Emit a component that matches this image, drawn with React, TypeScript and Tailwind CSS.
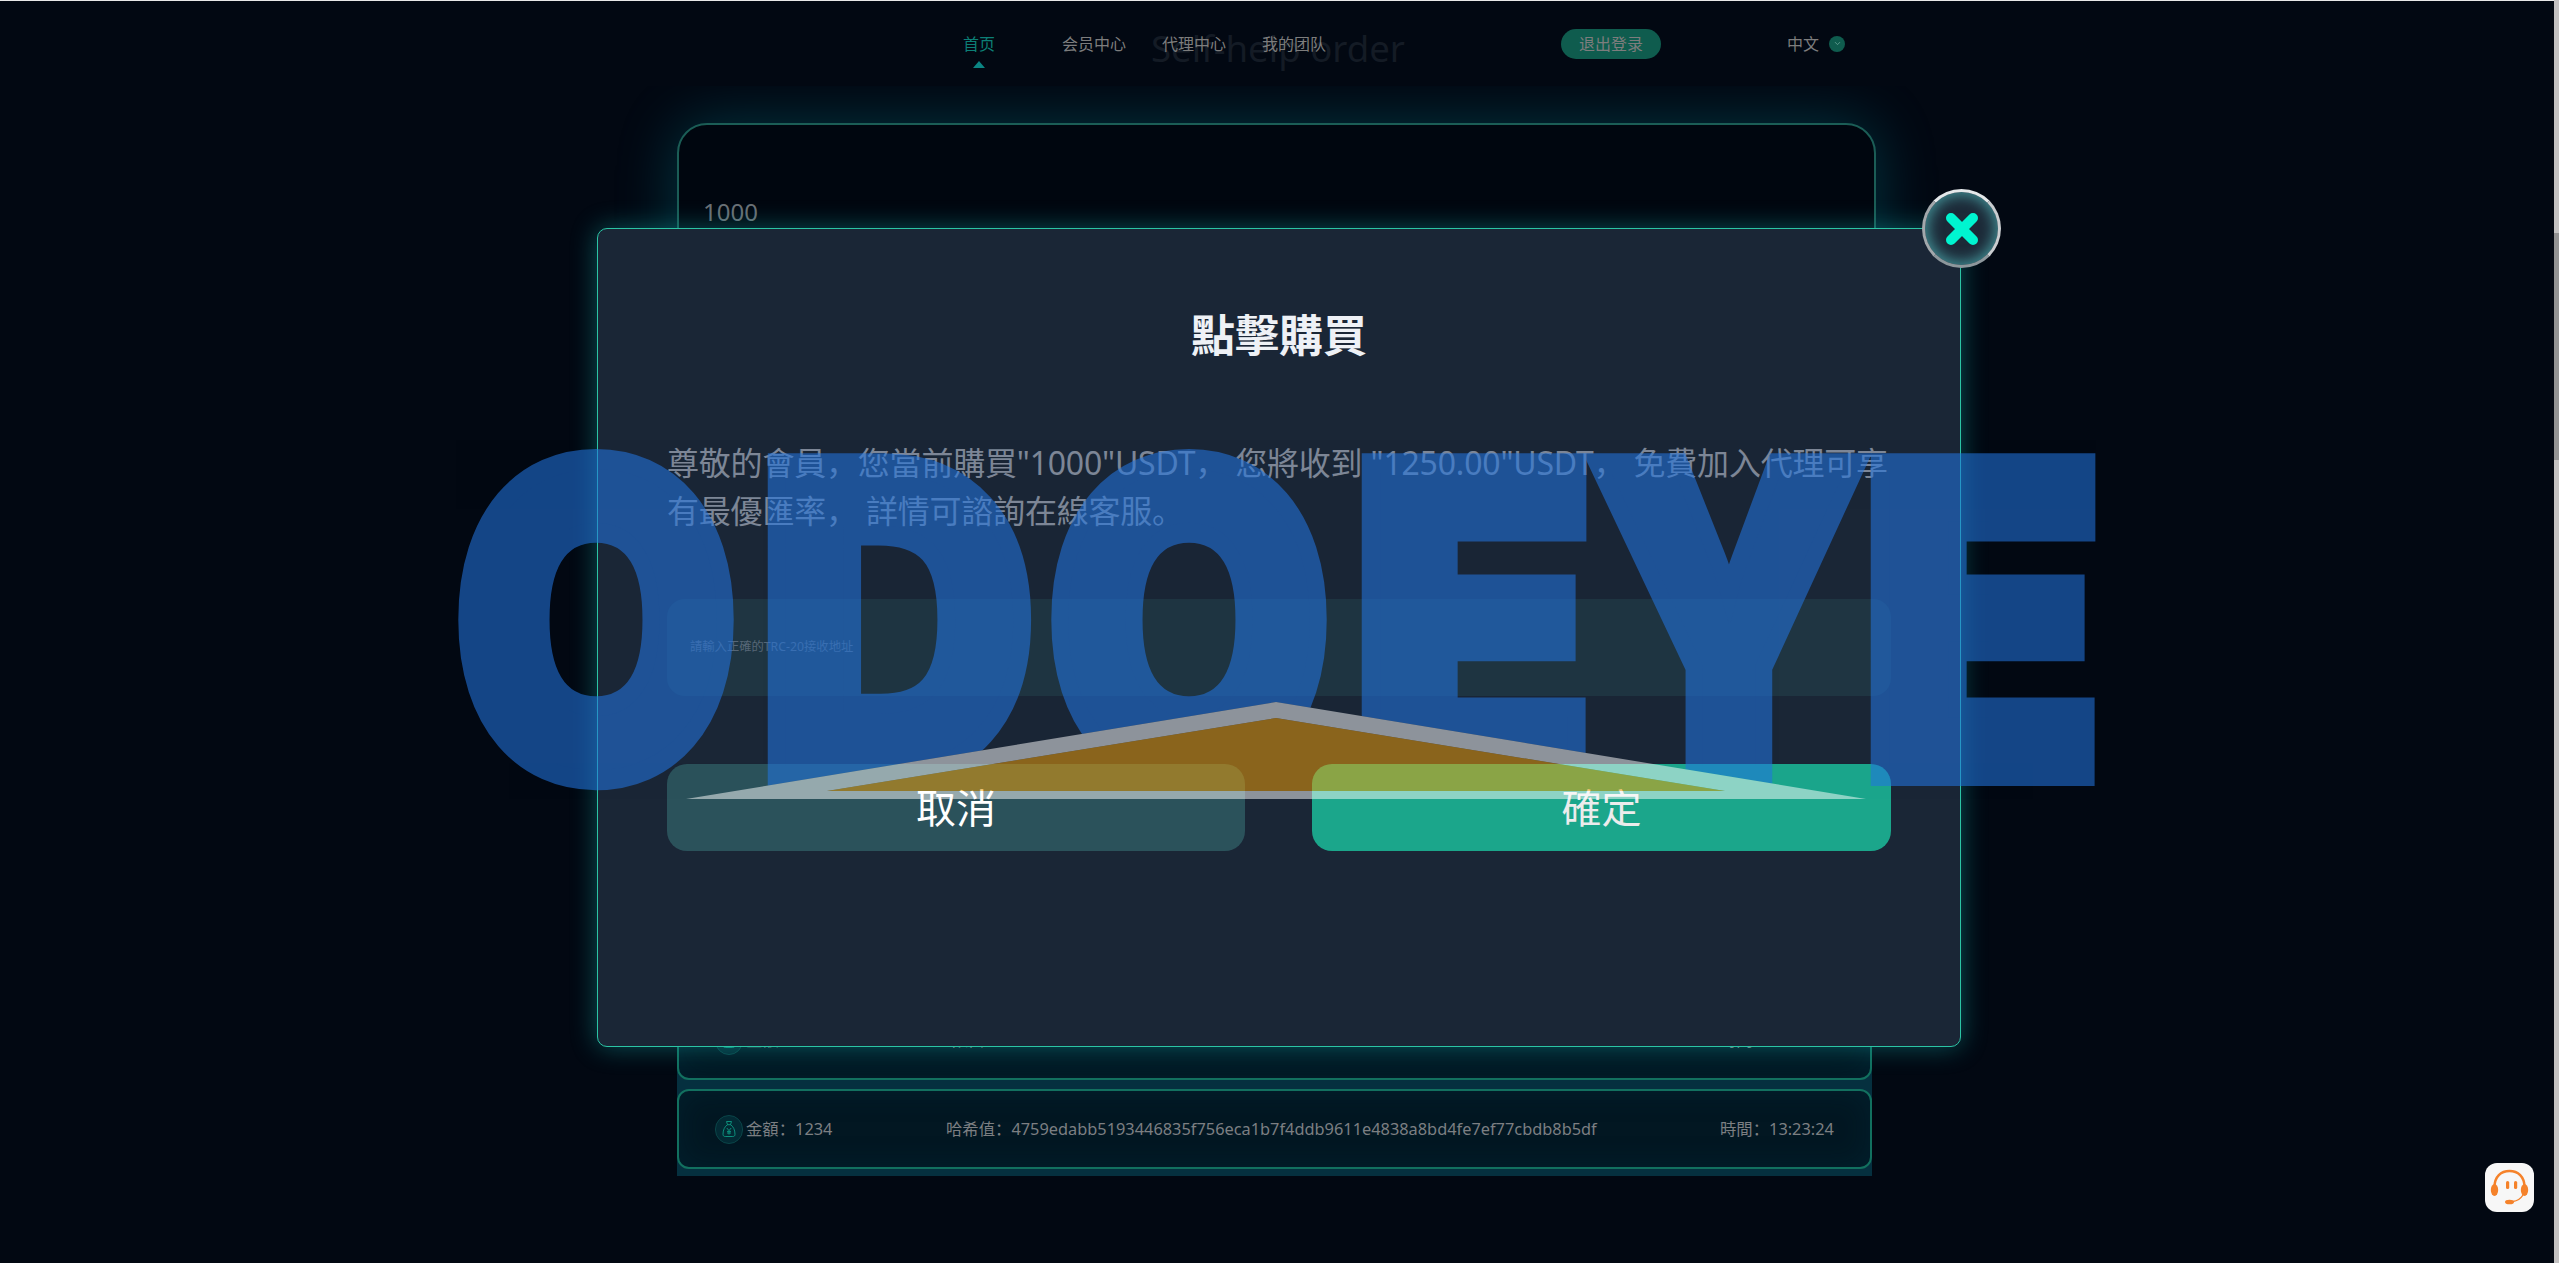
import React from 'react';
import {ChevronDown} from 'lucide-react';

const SANS = "font-['Noto_Sans','Noto_Sans_CJK_SC',sans-serif]";

const LETTERS = [
  {char: 'O', cls: 'ml-0 w-[280px] scale-x-[0.85]'},
  {char: 'D', cls: 'ml-[28px] w-[266px] scale-x-[0.89]'},
  {char: 'O', cls: 'ml-[19px] w-[280px] scale-x-[0.85]'},
  {char: 'E', cls: 'ml-[30px] w-[228px] scale-x-[0.915]'},
  {char: 'Y', cls: 'ml-[4px] w-[273px] scale-x-[0.83]'},
  {char: 'E', cls: 'ml-[4px] w-[228px] scale-x-[0.915]'},
];

const MoneyIcon = () => (
  <div className="flex h-[29px] w-[28px] shrink-0 items-center justify-center rounded-full border border-[#0a4548] bg-[#032a34]">
    <svg width="16" height="18" viewBox="0 0 16 18" fill="none" stroke="#0d8f7c" strokeWidth="1">
      <path d="M5.5 1.5h5l-1 3.2c2.6 1.6 4.5 5 4.5 9.5 0 1.6-.8 2.3-2.2 2.3H4.200C2.800 16.500 2 15.800 2 14.200c0-4.500 1.900-7.900 4.500-9.500z" />
      <path d="M6 4.700h4M5.800 8l2.200 2.600L10.200 8M8 10.600v4M6 11.400h4M6 13h4" />
    </svg>
  </div>
);

const HistoryRow = ({amount, hash, time}: {amount: string; hash: string; time: string}) => (
  <div className="flex h-20 items-center rounded-[12px] border-2 border-[#12705f] bg-[#021722] pl-9 text-[16.35px] text-[#7c7f82] shadow-[inset_0_0_30px_rgba(0,60,80,0.25)]">
    <MoneyIcon />
    <span className="ml-[3px] w-[200px] whitespace-nowrap">金額：{amount}</span>
    <span className="w-[774px] whitespace-nowrap">哈希值：{hash}</span>
    <span className="whitespace-nowrap">時間：{time}</span>
  </div>
);

const Headset = () => (
  <svg width="49" height="49" viewBox="0 0 49 49" fill="none">
    <path d="M9.500 24C9.500 13.500 16 8 24.500 8S39.500 13.500 39.500 24" stroke="#f5822a" strokeWidth="2.500" />
    <ellipse cx="9.500" cy="27" rx="3.700" ry="6" fill="#f5822a" />
    <ellipse cx="39.500" cy="27" rx="3.700" ry="6" fill="#f5822a" />
    <rect x="21" y="18" width="3.200" height="8" rx="1.600" fill="#f5822a" />
    <rect x="29" y="18" width="3.200" height="8" rx="1.600" fill="#f5822a" />
    <ellipse cx="24.500" cy="39" rx="4.500" ry="2.300" fill="#f5822a" />
    <path d="M28 38.500c4.500-.5 7.500-2.500 10-6.500" stroke="#f5822a" strokeWidth="1.400" />
  </svg>
);

export default function App() {
  return (
    <div className={`relative flex h-screen w-full overflow-hidden bg-[#020812] ${SANS}`}>
      <div className="min-w-0 flex-1">
        {/* Header */}
        <header className="relative z-10 flex h-[86px] items-center border-t border-[#e8e8e8] bg-[#020812] pl-[963px] text-base text-[#7d7d7d]">
          <span className="absolute top-[20px] left-[1151px] text-[36.6px] whitespace-nowrap text-[#141b25]">
            Self-help order
          </span>
          <div className="relative w-[99px] text-[#0c7f76]">
            首页
            <span className="absolute top-[29px] left-[10px] h-0 w-0 border-x-[6px] border-b-[7px] border-x-transparent border-b-[#0b8583]" />
          </div>
          <div className="relative w-[100px]">会员中心</div>
          <div className="relative w-[100px]">代理中心</div>
          <div className="relative w-[100px]">我的团队</div>
          <div className="relative ml-[199px] flex h-[30px] w-[100px] items-center justify-center rounded-full bg-[#0f5c4e]">
            退出登录
          </div>
          <div className="relative ml-[126px] flex items-center">
            中文
            <span className="ml-[10px] flex h-4 w-4 items-center justify-center rounded-full bg-[#0f5c4e] text-[#6fa89c]">
              <ChevronDown size={9} strokeWidth={2} />
            </span>
          </div>
        </header>

        {/* Page content behind the dialog */}
        <main className="ml-[677px] w-[1199px]">
          <div className="mt-[37px] h-[840px] rounded-[30px] border-2 border-[#1b5d56] bg-[#00060f] pt-[71px] pl-6 text-2xl text-[#6b6f75] shadow-[0_0_60px_rgba(0,170,190,0.28)]">
            1000
          </div>
          <div className="mt-[28px] flex w-[1195px] flex-col gap-[9px] bg-[#05303f] pt-[9px] pb-[7px]">
            <HistoryRow amount="5678" hash="2a1f6c0d9e3b47a8c5d2f10b6e8a4c7d93b5e1f2a6d4c8b07e3f9a1d5c2b6e48" time="13:20:11" />
            <HistoryRow amount="1234" hash="4759edabb5193446835f756eca1b7f4ddb9611e4838a8bd4fe7ef77cbdb8b5df" time="13:23:24" />
          </div>
        </main>
      </div>

      {/* Scrollbar */}
      <div className="w-[5px] shrink-0 bg-[#c4c2c2] pt-[233px]">
        <div className="h-[227px] bg-[#939393]" />
      </div>

      {/* Dialog */}
      <div className="absolute top-[228px] left-[597px] z-20 h-[819px] w-[1364px] rounded-[10px] border border-[#2bc4a4] bg-[#1a2636] px-[69px] pt-[76px] shadow-[0_0_26px_rgba(20,170,170,0.45)]">
        <h2 className="text-center text-[44px] leading-[60px] font-bold text-[#eef1f6]">點擊購買</h2>
        <p className="mt-[74px] text-[32px] leading-[48px] tracking-[-0.2px] text-[#7d8696]">
          尊敬的會員，您當前購買"1000"USDT， 您將收到 "1250.00"USDT， 免費加入代理可享有最優匯率， 詳情可諮詢在線客服。
        </p>
        <div className="mt-[64px] flex h-[97px] items-center rounded-[18px] bg-[#1f3542] pl-[23px] text-[12.3px] text-[#566676]">
          請輸入正確的TRC-20接收地址
        </div>
        <div className="mt-[68px] flex justify-between">
          <button className="h-[87px] w-[578px] rounded-[20px] bg-[#2b525b] text-[40px] text-white">取消</button>
          <button className="h-[87px] w-[579px] rounded-[20px] bg-[#1ba68b] text-[40px] text-[#ececec]">確定</button>
        </div>
        <button className="absolute -top-[40px] -right-[41px] flex h-[79px] w-[79px] items-center justify-center rounded-full border-[3px] border-t-[#e4e8ea] border-r-[#c9cdd0] border-b-[#8d979c] border-l-[#a2a8ac] bg-[#1c2a38] shadow-[inset_0_0_14px_3px_rgba(90,210,210,0.6)]">
          <svg width="34" height="34" viewBox="0 0 34 34" stroke="#00f5d0" strokeWidth="10" strokeLinecap="round">
            <path d="M6 6l22 22M28 6L6 28" />
          </svg>
        </button>
      </div>

      {/* Watermark */}
      <div className="pointer-events-none absolute top-[440px] left-[456px] z-30 flex h-[359px] w-[1640px] items-center font-['Inter',sans-serif] text-[430px] leading-none font-black text-[#2374df] opacity-[0.57] [-webkit-text-stroke:20px_#2374df] [clip-path:polygon(0_0,100%_0,100%_100%,1410px_100%,820px_262px,230px_100%,0_100%)]">
        {LETTERS.map((l, i) => (
          <span key={i} className={`flex shrink-0 justify-center ${l.cls}`}>
            {l.char}
          </span>
        ))}
      </div>
      <svg className="pointer-events-none absolute top-[702px] left-[686px] z-30" width="1180" height="97" viewBox="0 0 1180 97">
        <path fillRule="evenodd" fill="#ffffff" fillOpacity="0.5" d="M0 97L590 0L1180 97ZM141 89H1039L590 16Z" />
        <path fill="#faa202" fillOpacity="0.5" d="M141 89H1039L590 16Z" />
      </svg>

      {/* Support button */}
      <div className="absolute top-[1163px] left-[2485px] z-10 h-[49px] w-[49px] rounded-[12px] bg-[#f7f7f7]">
        <Headset />
      </div>
    </div>
  );
}
